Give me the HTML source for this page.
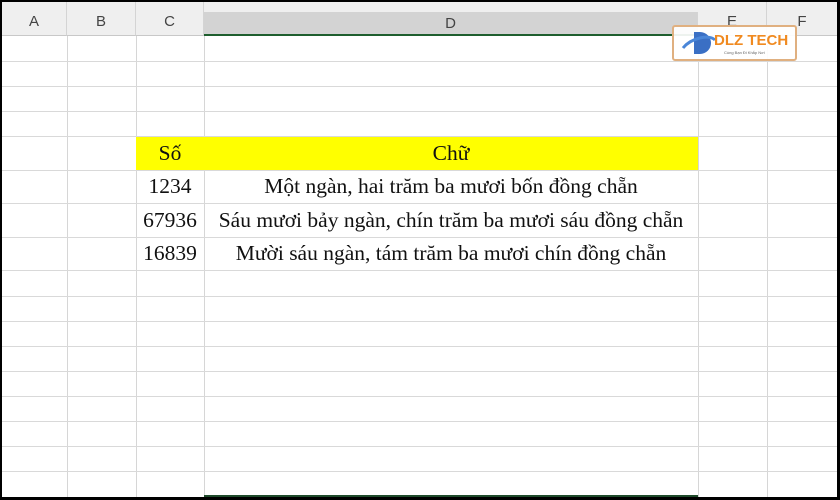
<!DOCTYPE html>
<html><head><meta charset="utf-8"><style>
*{margin:0;padding:0;box-sizing:border-box}
body{width:840px;height:500px;background:#000;position:relative;overflow:hidden;font-family:"Liberation Serif",serif}
#sheet{position:absolute;left:2px;top:2px;width:835px;height:495px;background:#fff;overflow:hidden}
.hdr{position:absolute;top:0;height:34px;background:#efefef;border-right:1px solid #d4d4d4;border-bottom:1px solid #c8c8c8;font-family:"Liberation Sans",sans-serif;font-size:15px;color:#444;text-align:center;line-height:40px}
.vl{position:absolute;top:34px;bottom:0;width:1px;background:#d6d6d6}
.hl{position:absolute;left:0;right:0;height:1px;background:#d9d9d9}
.t{position:absolute;font-size:21.5px;color:#111;text-align:center;white-space:nowrap}
</style></head><body><div id="sheet">
<div class="hdr" style="left:0;width:65px">A</div>
<div class="hdr" style="left:65px;width:69px">B</div>
<div class="hdr" style="left:134px;width:68px">C</div>
<div class="hdr" style="left:202px;width:494px;background:#d3d3d3;border-bottom:2px solid #1e5e2e;top:10px;height:24px;line-height:24px">D</div>
<div class="hdr" style="left:202px;width:494px;top:0;height:10px;border:none;background:#efefef"></div>
<div class="hdr" style="left:696px;width:69px">E</div>
<div class="hdr" style="left:765px;width:70px;border-right:none">F</div>
<div class="vl" style="left:65px"></div><div class="vl" style="left:134px"></div><div class="vl" style="left:202px"></div><div class="vl" style="left:696px"></div><div class="vl" style="left:765px"></div>
<div class="hl" style="top:59px"></div><div class="hl" style="top:84px"></div><div class="hl" style="top:109px"></div><div class="hl" style="top:134px"></div>
<div style="position:absolute;left:134px;top:135px;width:562px;height:33px;background:#ffff00"></div>
<div class="hl" style="top:168px"></div><div class="hl" style="top:201px"></div><div class="hl" style="top:235px"></div><div class="hl" style="top:268px"></div>
<div class="hl" style="top:294px"></div><div class="hl" style="top:319px"></div><div class="hl" style="top:344px"></div><div class="hl" style="top:369px"></div><div class="hl" style="top:394px"></div><div class="hl" style="top:419px"></div><div class="hl" style="top:444px"></div><div class="hl" style="top:469px"></div>
<div style="position:absolute;left:202px;top:493px;width:494px;height:3px;background:#1e4a2a"></div>
<div class="t" style="left:134px;width:68px;top:139px">Số</div>
<div class="t" style="left:202px;width:494px;top:139px">Chữ</div>
<div class="t" style="left:134px;width:68px;top:172px">1234</div>
<div class="t" style="left:202px;width:494px;top:172px">Một ngàn, hai trăm ba mươi bốn đồng chẵn</div>
<div class="t" style="left:134px;width:68px;top:206px">67936</div>
<div class="t" style="left:202px;width:494px;top:206px">Sáu mươi bảy ngàn, chín trăm ba mươi sáu đồng chẵn</div>
<div class="t" style="left:134px;width:68px;top:239px">16839</div>
<div class="t" style="left:202px;width:494px;top:239px">Mười sáu ngàn, tám trăm ba mươi chín đồng chẵn</div>
<div style="position:absolute;left:670px;top:23px;width:125px;height:36px;background:rgba(255,255,255,0.92);border:2px solid #e0b080;border-radius:3px">
<svg width="40" height="32" viewBox="0 0 40 32" style="position:absolute;left:6px;top:1px"><path d="M14 4h6a11 11 0 0 1 0 22h-6z" fill="#3a6fc4"/><path d="M3 20c8-10 26-14 32-8" stroke="#4a86d8" stroke-width="3" fill="none"/></svg>
<div style="position:absolute;left:40px;top:5px;font-family:'Liberation Sans',sans-serif;font-weight:bold;font-size:15px;color:#f08a20;white-space:nowrap">DLZ TECH</div>
<div style="position:absolute;left:50px;top:23px;font-family:'Liberation Sans',sans-serif;font-size:4px;color:#666;white-space:nowrap">Cùng Bạn Đi Khắp Nơi</div>
</div>
</div></body></html>
